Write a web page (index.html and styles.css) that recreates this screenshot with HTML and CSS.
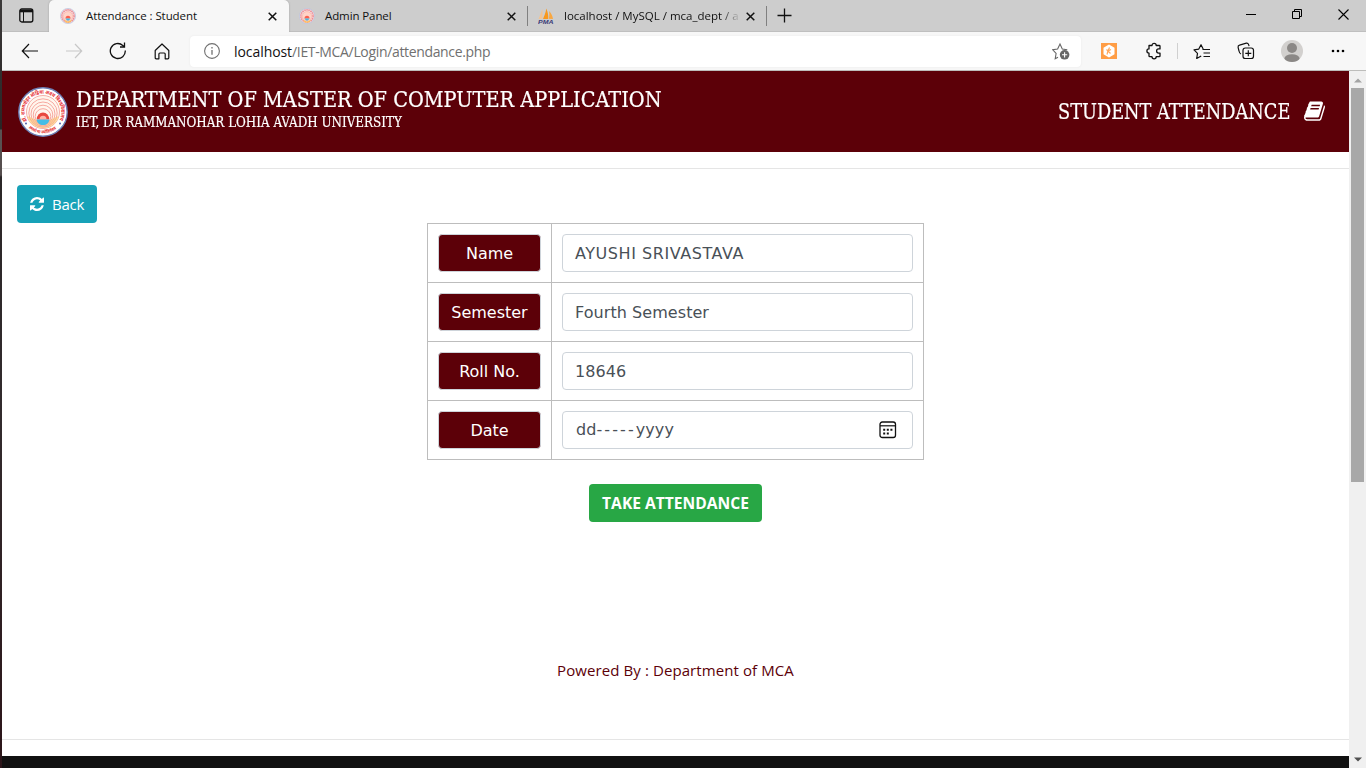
FILE: index.html
```
<!DOCTYPE html>
<html lang="en">
<head>
<meta charset="utf-8">
<title>Attendance : Student</title>
<link rel="stylesheet" href="styles.css">
</head>
<body>
<svg class="defs" width="0" height="0" aria-hidden="true">
  <defs>
    <path id="arc-top" d="M9 33.700A18.200 18.200 0 1 1 41 33.700"/>
    <path id="arc-bottom" d="M10.500 40.900A21.500 21.500 0 0 0 39.500 40.900"/>
    <symbol id="seal" viewBox="0 0 50 50">
      <circle cx="25" cy="25" r="24.200" fill="#fff" stroke="#6d7fb5" stroke-width="1.400"/>
      <circle cx="25" cy="25" r="16.500" fill="#fff6ee" stroke="#ef8f86" stroke-width=".7"/>
      <path d="M9.500 29a16 16 0 0 0 31 0L25 36z" fill="#ffe08a"/>
      <g fill="none" stroke="#f7a9a0" stroke-width="1">
        <circle cx="25" cy="26" r="14.200"/><circle cx="25" cy="27" r="12"/><circle cx="25" cy="28" r="9.800"/><circle cx="25" cy="29.500" r="7.800"/>
      </g>
      <path d="M18.700 32.500a6.300 7 0 0 1 12.600 0z" fill="#e8483f"/>
      <path d="M21.500 32.500a3.500 3.700 0 0 1 7 0z" fill="#ffb3a5"/>
      <path d="M18.700 32.500h12.600c0 3.500-3 5.500-6.300 5.500s-6.300-2-6.300-5.500z" fill="#45bde6"/>
      <g fill="#e5282b" font-family="Noto Sans, sans-serif" font-weight="700" font-size="5.200">
        <text textLength="74" lengthAdjust="spacingAndGlyphs"><textPath href="#arc-top" textLength="74" lengthAdjust="spacingAndGlyphs">डॉ. राममनोहर लोहिया अवध विश्वविद्यालय</textPath></text>
        <text font-size="4.500"><textPath href="#arc-bottom" textLength="30" lengthAdjust="spacingAndGlyphs">तमसो मा ज्योतिर्गमय</textPath></text>
      </g>
      <circle cx="8" cy="36.500" r=".9" fill="#3c4fa0"/><circle cx="42" cy="36.500" r=".9" fill="#3c4fa0"/>
    </symbol>
    <symbol id="favicon" viewBox="0 0 16 16">
      <circle cx="8" cy="8" r="7.600" fill="#f3dfe6" stroke="#b9c3de" stroke-width=".7"/>
      <circle cx="8" cy="8" r="6.100" fill="none" stroke="#ee8f93" stroke-width="1.600" stroke-dasharray="1.500 .6"/>
      <circle cx="8" cy="8.300" r="4.700" fill="#ffd3c8" stroke="#fdb5a6" stroke-width=".7"/>
      <path d="M4 11.500l3 2h2l3-2-2 3H6z" fill="#ffcb50"/>
      <path d="M5.500 10.500a2.500 2.800 0 0 1 5 0z" fill="#f9604f"/>
      <path d="M5.500 10.500h5l-1.500 1.900H7z" fill="#45b8e0"/>
    </symbol>
    <symbol id="close" viewBox="0 0 9 9"><path d="M.7.7l7.600 7.600M8.300.7L.7 8.300" stroke="#111" stroke-width="1.500"/></symbol>
  </defs>
</svg>

<div class="desktop">
<div class="window">
  <div class="tabstrip">
    <div class="tab-actions"><svg width="15" height="15" viewBox="0 0 15 15" fill="none" stroke="#111"><rect x=".8" y="1" width="13" height="13" rx="2" stroke-width="1.300"/><path d="M1 3h13" stroke-width="2.600"/><path d="M4.500 4v10"/></svg></div>
    <div class="tab active"><svg class="fav"><use href="#favicon"/></svg><span class="tab-title t1">Attendance : Student</span><svg class="x"><use href="#close"/></svg></div>
    <div class="tab second"><svg class="fav"><use href="#favicon"/></svg><span class="tab-title t2">Admin Panel</span><svg class="x"><use href="#close"/></svg></div>
    <div class="tab third"><svg class="fav" viewBox="0 0 16 16"><path d="M.5 11C2 8 3 4 4.500 1v9.800z" fill="#f3c493"/><path d="M5 11C6 8 8 5 8.200.5 10 4 10.500 8 10.200 11z" fill="#f8981d"/><path d="M10.800 10.800C11.500 8 11.500 5 11 3c2 2 3.500 4.500 4 8z" fill="#f9a740"/><text x="0" y="15.800" class="pma" textLength="15.500" lengthAdjust="spacingAndGlyphs">PMA</text></svg><span class="tab-title t3">localhost / MySQL / mca_dept / a</span><svg class="x"><use href="#close"/></svg></div>
    <svg class="plus" width="15" height="15" viewBox="0 0 15 15"><path d="M7.500.5v14M.5 7.500h14" stroke="#111" stroke-width="1.300"/></svg>
    <div class="winctl">
      <svg width="10" height="11" viewBox="0 0 10 11"><path d="M0 5.500h10" stroke="#000"/></svg>
      <svg width="11" height="11" viewBox="0 0 11 11" fill="none" stroke="#000"><path d="M.5 2.500h7v7h-7z"/><path d="M2.500 2.500v-2h7v7h-2"/></svg>
      <svg width="11" height="11" viewBox="0 0 11 11"><path d="M.5.5l10 10M10.500.5l-10 10" stroke="#000" stroke-width="1.100"/></svg>
    </div>
  </div>

  <div class="toolbar">
    <div class="nav">
      <svg width="18" height="16" viewBox="0 0 18 16" fill="none" stroke="#111" stroke-width="1.200"><path d="M17 8H1.500M8 1L1.300 8 8 15"/></svg>
      <svg width="18" height="16" viewBox="0 0 18 16" fill="none" stroke="#c8c8c8" stroke-width="1.200"><path d="M1 8h15.500M10 1l6.700 7L10 15"/></svg>
      <svg width="18" height="18" viewBox="0 0 18 18" fill="none" stroke="#111" stroke-width="1.300"><path d="M16.300 8.500A7.500 7.500 0 1 1 13.800 3.400L15.500 5M15.500.5V5H11"/></svg>
      <svg class="home" width="16" height="17" viewBox="0 0 16 17" fill="none" stroke="#111" stroke-width="1.200" stroke-linejoin="round"><path d="M1.200 7.500L8 1l6.800 6.500v7.300q0 1-1 1h-2.600V11q0-1-1-1H5.900q-1 0-1 1v4.800H2.200q-1 0-1-1z"/></svg>
    </div>
    <div class="address">
      <svg width="16" height="16" viewBox="0 0 16 16"><circle cx="8" cy="8" r="7.400" fill="none" stroke="#707070" stroke-width="1.100"/><path d="M8 7v4.800M8 4v1.500" stroke="#707070" stroke-width="1.300"/></svg>
      <span class="url"><b>localhost</b>/IET-MCA/Login/attendance.php</span>
      <svg class="star" width="18" height="18" viewBox="0 0 18 18"><path d="M6 15.300l-2.800 1.500.9-5.300L.8 7.800l4.800-.7L8 2l2.300 5 5 .7" fill="none" stroke="#666" stroke-width="1.100"/><circle cx="12.600" cy="12.800" r="4.800" fill="#666"/><path d="M12.600 10.200v5.200M10 12.800h5.200" stroke="#fff" stroke-width="1.100"/></svg>
    </div>
    <div class="tools">
      <svg class="ext" width="16" height="16" viewBox="0 0 16 16"><path fill="#ff9d45" d="M0 0h16v16H0z"/><path d="M8 1.500l5.500 3.200v6.600L8 14.500l-5.500-3.200V4.700z" fill="#fff"/><path d="M8.500 4.500L7 8l3-1.500M5.500 6.500L7 8l-1 3.500M7 8l2.500 2.500" stroke="#ffa85c" stroke-width="1.200" fill="none"/></svg>
      <svg class="puzzle" width="16" height="18" viewBox="0 0 16 18"><path d="M3 3.500h3a2.100 2.100 0 0 1 4.200 0h3q.8 0 .8.800v2.600h-1.300a2.100 2.100 0 0 0 0 4.200H14v2.800q0 .8-.8.800h-3a2.100 2.100 0 0 1-4.200 0H3.800q-.8 0-.8-.8v-2.800a2.100 2.100 0 0 1 0-4.200z" fill="none" stroke="#111" stroke-width="1.300" stroke-linejoin="round"/></svg>
      <i class="sep"></i>
      <svg class="favs" width="18" height="17" viewBox="0 0 18 17"><path d="M10.200 6L8 1.700 5.800 6.100 1 6.800l3.500 3.500-.8 5.200 4.500-2.600" fill="none" stroke="#111" stroke-width="1.200" stroke-linejoin="round"/><path d="M9.500 6.500H17M10.500 10H17M10.500 13.500H17" stroke="#111" stroke-width="1.200"/></svg>
      <svg class="coll" width="18" height="18" viewBox="0 0 18 18" fill="none" stroke="#111" stroke-width="1.200"><rect x="6" y="6" width="10.500" height="10.500" rx="2.300"/><path d="M11.300 8.300v6M8.300 11.300h6M4 12C2.500 11.500 2.300 10.500 2 9L1.100 5.500Q.8 3.600 2.500 3.200L9.300 1.200q1.600-.3 2.200 1.200l.6 1.700"/></svg>
      <svg class="avatar" width="22" height="22" viewBox="0 0 22 22"><clipPath id="av"><circle cx="11" cy="11" r="11"/></clipPath><g clip-path="url(#av)"><path fill="#d2d0ce" d="M0 0h22v22H0z"/><circle cx="11" cy="8" r="5" fill="#8b8886"/><ellipse cx="11" cy="19" rx="7.700" ry="4.800" fill="#8b8886"/></g></svg>
      <svg class="more" width="14" height="4" viewBox="0 0 14 4"><circle cx="2" cy="2" r="1.300"/><circle cx="7" cy="2" r="1.300"/><circle cx="12" cy="2" r="1.300"/></svg>
    </div>
  </div>

  <div class="view">
    <div class="page">
      <header class="header">
        <svg class="logo"><use href="#seal"/></svg>
        <div class="brand"><h1><span>DEPARTMENT OF MASTER OF COMPUTER APPLICATION</span></h1><p><span>IET, DR RAMMANOHAR LOHIA AVADH UNIVERSITY</span></p></div>
        <h2><span>STUDENT ATTENDANCE</span></h2>
        <svg class="book" viewBox="0 0 1664 1536" width="21" height="21"><path fill="#fff" d="M1639 322q40 57 18 129l-275 906q-19 64-76.500 107.500T1183 1508H260q-77 0-148.500-53.500T12 1323q-24-67-2-127 0-4 3-27t4-37q1-8-3-21.500t-3-19.500q2-11 8-21t16.500-23.500T52 1023q23-38 45-91.500t30-91.500q3-10 .5-30t-.5-28q3-11 17-28t17-23q21-36 42-92t25-90q1-9-2.500-32t.5-28q4-13 22-30.500t22-22.500q19-26 42.500-84.500T340 255q1-8-3-25.500t-2-26.500q2-8 9-18t18-23 17-21q8-12 16.500-30.500t15-35 16-36 19.500-32T472.500-16t36-11.500T556-22l-1 3q38-9 51-9h761q74 0 114 56t18 130l-274 906q-36 119-71.500 153.500T1025 1252H156q-27 0-38 15-11 16-1 43 24 70 144 70h923q29 0 56-15.500t35-41.500l300-987q7-22 5-57 38 15 59 43zm-1064 2q-4 13 2 22.500t20 9.500h608q13 0 25.500-9.500T1247 324l21-64q4-13-2-22.500t-20-9.500H638q-13 0-25.500 9.500T596 260zm-83 256q-4 13 2 22.500t20 9.500h608q13 0 25.500-9.500T1164 580l21-64q4-13-2-22.500t-20-9.500H555q-13 0-25.500 9.500T513 516z"/></svg>
      </header>
      <hr class="rule top">
      <main class="content">
        <button class="back"><svg width="14" height="14" viewBox="0 0 1536 1536"><path fill="#fff" d="M1511 928q0 5-1 7-64 268-268 434.500T764 1536q-146 0-282.500-55T238 1324l-129 129q-19 19-45 19t-45-19-19-45V960q0-26 19-45t45-19h448q26 0 45 19t19 45-19 45l-137 137q71 66 161 102t187 36q134 0 250-65t186-179q11-17 53-117 8-23 30-23h192q13 0 22.500 9.500t9.500 22.500zm25-800v448q0 26-19 45t-45 19h-448q-26 0-45-19t-19-45 19-45l138-138Q969 256 768 256q-134 0-250 65T332 500q-11 17-53 117-8 23-30 23H50q-13 0-22.500-9.500T18 608v-7q65-268 270-434.500T768 0q146 0 284 55.500T1297 212l130-129q19-19 45-19t45 19 19 45z"/></svg><span>Back</span></button>
        <table class="form">
          <tr><td><div class="label">Name</div></td><td><div class="field wide">AYUSHI SRIVASTAVA</div></td></tr>
          <tr><td><div class="label">Semester</div></td><td><div class="field">Fourth Semester</div></td></tr>
          <tr><td><div class="label">Roll No.</div></td><td><div class="field">18646</div></td></tr>
          <tr><td><div class="label">Date</div></td><td><div class="field date"><span>dd<i>-----</i>yyyy</span><svg width="18" height="18" viewBox="0 0 18 18"><rect x="1" y="1" width="15.500" height="15.500" rx="2.300" fill="none" stroke="#111" stroke-width="1.300"/><path d="M1 4.800h15.500" stroke="#111" stroke-width="1.200"/><path d="M4.200 8.800h2M7.800 8.800h2M11.400 8.800h2M4.200 12.400h2M7.800 12.400h2" stroke="#111" stroke-width="2"/></svg></div></td></tr>
        </table>
        <button class="take">TAKE ATTENDANCE</button>
        <p class="powered">Powered By : Department of MCA</p>
      </main>
      <hr class="rule bottom">
      <footer class="footer"></footer>
    </div>
    <div class="scroll"><svg width="8" height="5" viewBox="0 0 8 5"><path d="M0 4.500L4 .5l4 4z" fill="#a3a3a3"/></svg><div class="thumb"></div><svg class="down" width="8" height="5" viewBox="0 0 8 5"><path d="M0 .5h8l-4 4z" fill="#505050"/></svg></div>
  </div>
</div>
</div>
</body>
</html>
```
FILE: styles.css
```
* { box-sizing: border-box; }
body { margin: 0; width: 1366px; height: 768px; overflow: hidden; font-family: "Open Sans", sans-serif; background: #fff; }
svg { display: block; flex: none; }
.defs { position: absolute; }
h1, h2, p { margin: 0; font-weight: 400; }
button { border: 0; font-family: inherit; }
.desktop { height: 768px; padding-left: 2px; background: linear-gradient(#3c3a3a 0, #292525 129px, #595252 130px, #554e4e 175px, #2b2728 177px, #322b2d 420px, #2c1519 768px); }
.window { height: 768px; display: flex; flex-direction: column; background: #fff; }

.tabstrip { height: 32px; display: flex; background: #cdcdcd; border-bottom: 1px solid #bfbfbf; font-size: 11.5px; color: #111; }
.tab-actions { width: 47px; padding: 8px 0 0 17px; }
.tab { display: flex; align-items: center; height: 31px; }
.tab.active { height: 32px; width: 240px; background: #f7f7f7; border-radius: 5px 5px 0 0; padding-left: 11px; box-shadow: 0 0 2px #999; clip-path: inset(0 -3px 0 -3px); }
.tab.second, .tab.third { width: 239px; padding-left: 10px; border-right: 1px solid #808080; height: 20px; margin-top: 6px; }
.fav { width: 16px; height: 16px; margin-right: 10px; }
.x { width: 9px; height: 9px; margin-left: auto; margin-right: 12px; }
.second .x, .third .x { margin-right: 11px; }
.tab-title { white-space: nowrap; line-height: 16px; }
.t1 { letter-spacing: -.08px; }
.t2 { letter-spacing: -.1px; }
.t3 { -webkit-mask-image: linear-gradient(90deg, #000 156px, transparent 177px); }
.pma { font: italic 700 5.500px "Liberation Sans", sans-serif; fill: #3b3b78; }
.plus { margin: 8px 0 0 10px; }
.winctl { display: flex; gap: 35.500px; margin: 9px 17px 0 auto; }

.toolbar { height: 39px; display: flex; align-items: center; background: #f7f7f7; border-bottom: 1px solid #bdbdbb; }
.nav { width: 187px; padding-left: 19px; display: flex; align-items: center; gap: 26px; }
.home { margin-left: 1px; }
.address { width: 891px; height: 31px; margin-left: 1px; background: #fff; border-radius: 4px; display: flex; align-items: center; padding: 0 11px 0 14px; box-shadow: 0 0 2px #e6e6e6; }
.url { margin-left: 14px; font-size: 14px; color: #707070; letter-spacing: -.34px; }
.url b { font-weight: 400; color: #111; letter-spacing: -.07px; }
.star { margin-left: auto; }
.tools { flex: 1; display: flex; align-items: center; padding-left: 20px; }
.puzzle { margin-left: 29px; }
.sep { width: 1px; height: 16px; background: #d0d0d0; margin-left: 15px; }
.favs { margin-left: 15px; }
.coll { margin-left: 26px; }
.avatar { margin-left: 26px; }
.more { margin-left: 28px; }

.view { flex: 1; min-height: 0; display: flex; }
.page { width: 1347px; display: flex; flex-direction: column; }
.header { height: 81px; background: #5c0008; color: #fff; display: flex; align-items: center; padding: 0 24px 0 16px; font-family: "DejaVu Serif Condensed", "DejaVu Serif", serif; white-space: nowrap; -webkit-text-stroke: .2px #fff; }
.logo { width: 50px; height: 50px; -webkit-text-stroke: 0; }
.brand { margin-left: 8px; width: 600px; align-self: flex-start; padding-top: 15px; }
.header span { display: inline-block; transform-origin: 0 50%; }
h1 { font-size: 22px; line-height: 27px; }
h1 span { transform: scaleX(.977); }
.brand p { font-size: 14px; line-height: 18px; }
.brand p span { transform: scaleX(.948); }
h2 { margin-left: auto; width: 246px; font-size: 22px; line-height: 28px; }
h2 span { transform: scaleX(.896); }
.book { overflow: visible; }
.rule { width: 100%; height: 1px; border: 0; background: #e5e5e5; }
.rule.top { margin: 16px 0; }
.rule.bottom { margin: 0 0 16px; }
.content { height: 554px; display: flex; flex-direction: column; align-items: center; }
.back { align-self: flex-start; margin-left: 15px; width: 80px; height: 38px; border-radius: 4px; background: #17a2b8; color: #fff; font-size: 15px; letter-spacing: -.2px; display: flex; align-items: center; padding: 0 13px; gap: 8px; }
.form { border-collapse: collapse; width: 497px; font: 16px "DejaVu Sans", sans-serif; }
.form td { border: 1px solid #bdbdbd; padding: 10px; height: 59px; }
.form td:first-child { width: 124px; }
.label, .field { height: 38px; border: 1px solid #ced4da; border-radius: 4px; line-height: 38px; }
.label { background: #5c0008; color: #fff; text-align: center; letter-spacing: -.02px; }
.field { color: #495057; padding-left: 12px; letter-spacing: .06px; }
.field.wide { letter-spacing: .56px; }
.date { display: flex; justify-content: space-between; align-items: center; padding: 0 15px 0 13px; }
.date i { font-style: normal; letter-spacing: 2.100px; }
.take { margin-top: 24px; width: 173px; height: 38px; border-radius: 4px; background: #28a745; color: #fff; font-size: 15.600px; font-weight: 700; padding: 0; }
.powered { margin-top: 137px; font-size: 15px; line-height: 22px; letter-spacing: .09px; color: #5c0008; }
.footer { flex: 1; background: #111; }
.scroll { width: 17px; background: #f0f0f0; display: flex; flex-direction: column; align-items: center; padding: 7px 1px 6px 1px; }
.thumb { width: 13px; height: 394px; margin-top: 5px; background: #a8a8a8; }
.down { margin-top: auto; }
```
